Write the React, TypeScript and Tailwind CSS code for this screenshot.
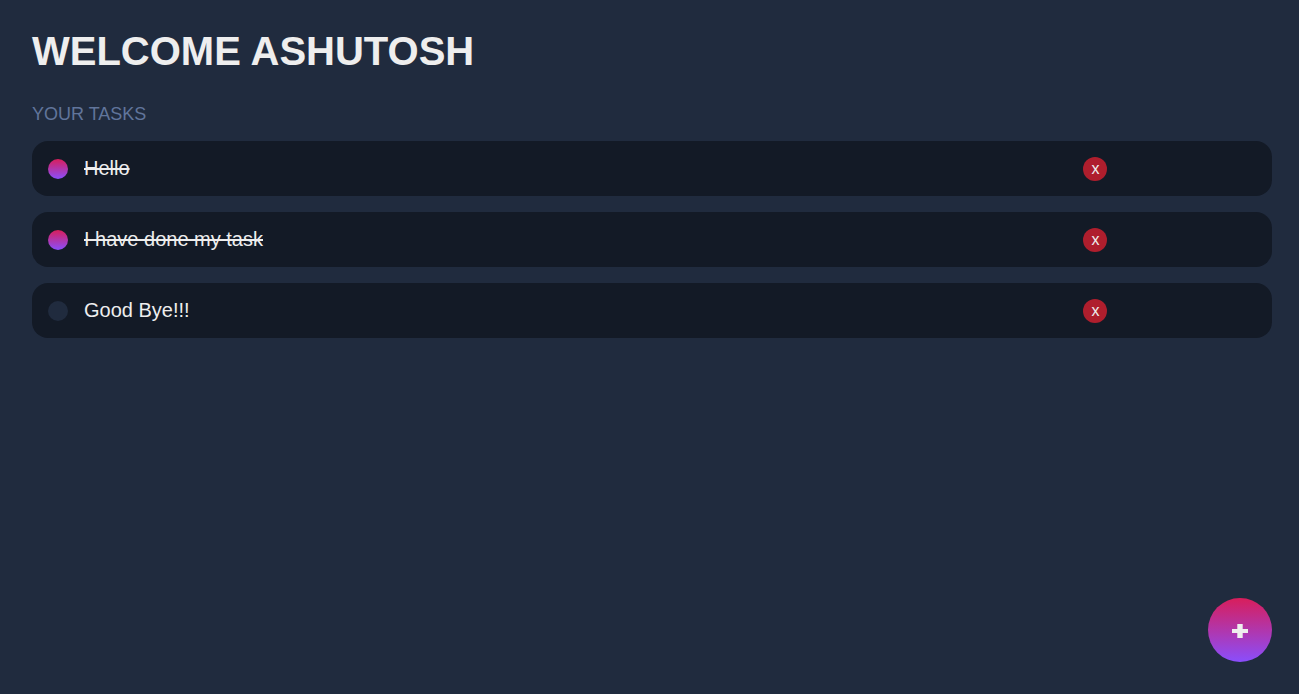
import { useState } from "react";

type Task = { id: number; text: string; complete: boolean };

const initialTasks: Task[] = [
  { id: 1, text: "Hello", complete: true },
  { id: 2, text: "I have done my task", complete: true },
  { id: 3, text: "Good Bye!!!", complete: false },
];

export default function App() {
  const [tasks, setTasks] = useState<Task[]>(initialTasks);

  const toggle = (id: number) =>
    setTasks((all) => all.map((t) => (t.id === id ? { ...t, complete: !t.complete } : t)));
  const remove = (id: number) => setTasks((all) => all.filter((t) => t.id !== id));
  const add = () => setTasks((all) => [...all, { id: Date.now(), text: "New task", complete: false }]);

  return (
    <main className="min-h-screen bg-[#202b3e] py-8 pr-[27px] pl-8 font-['Liberation_Sans',Arial,sans-serif] text-[#eee]">
      <h1 className="mb-8 text-[40px] leading-[38px] font-bold uppercase">Welcome Ashutosh</h1>
      <h2 className="mb-3.5 text-lg leading-[25px] text-[#61759b] uppercase">Your tasks</h2>
      <ul className="flex flex-col gap-4">
        {tasks.map((task) => (
          <li key={task.id} className="flex h-[55px] items-start rounded-2xl bg-[#131a26] p-4">
            <label className="flex w-6/7 items-end gap-4 text-xl leading-[22px]">
              <input
                type="checkbox"
                checked={task.complete}
                onChange={() => toggle(task.id)}
                className="size-5 shrink-0 appearance-none rounded-full bg-[#202b3e] checked:bg-linear-to-b/srgb checked:from-[#d81e5b] checked:to-[#8a4efc]"
              />
              <span className={task.complete ? "line-through" : ""}>{task.text}</span>
            </label>
            <button
              type="button"
              aria-label={`Delete ${task.text}`}
              onClick={() => remove(task.id)}
              className="flex size-6 items-center justify-center rounded-full bg-[#af1e2d] text-base leading-6"
            >
              x
            </button>
          </li>
        ))}
      </ul>
      <button
        type="button"
        aria-label="Add task"
        onClick={add}
        className="fixed right-[27px] bottom-8 size-16 rounded-full bg-linear-to-b/srgb from-[#d81e5b] to-[#8a4efc]"
      >
        <svg viewBox="0 0 64 64" className="size-16 fill-current" aria-hidden="true">
          <path d="M29.300 26h5.400v5H40v4h-5.300v5h-5.400v-5H24v-4h5.300z" />
        </svg>
      </button>
    </main>
  );
}
